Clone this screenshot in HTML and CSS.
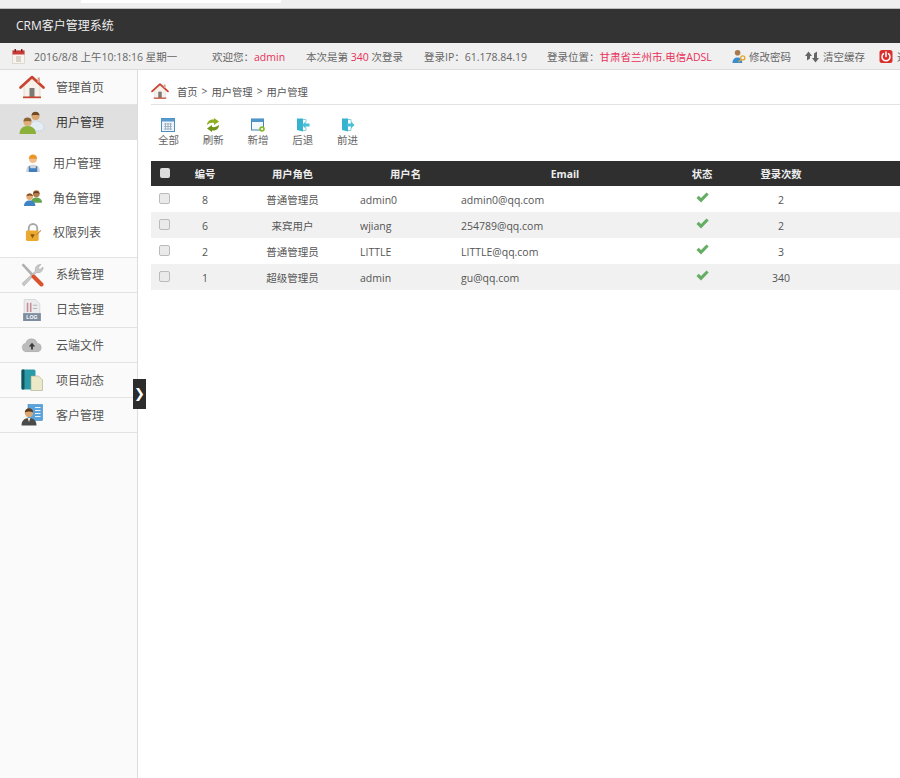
FILE: index.html
```html
<!DOCTYPE html>
<html>

<head>
	<meta name="viewport" content="width=device-width, initial-scale=1.0">
	<meta charset="UTF-8">
	<title>CRM客户管理系统</title>
	<link rel="stylesheet" href="styles.css">
</head>

<body>
	<svg class="sprite" xmlns="http://www.w3.org/2000/svg">
		<symbol id="i-home" viewBox="0 0 26 24">
			<path d="M5 11v11h16V11L13 4z" fill="#f6f1ea" stroke="#d9cfc4" stroke-width=".6" />
			<path d="M1.500 12.500 13 2l11.500 10.500" fill="none" stroke="#c9442f" stroke-width="2.600" stroke-linecap="round" stroke-linejoin="round" />
			<rect x="18.500" y="2.500" width="2.500" height="5" fill="#d8a48f" />
			<rect x="10.500" y="13" width="5" height="9" fill="#7d7a76" />
			<rect x="4" y="21.500" width="18" height="1.700" fill="#c9442f" />
		</symbol>
		<symbol id="i-users" viewBox="0 0 26 24">
			<circle cx="16.500" cy="5" r="4" fill="#d9a66f" />
			<path d="M16.500 .8a4.200 4.200 0 0 1 4 3.600c-2.500-.3-5-.5-8 0a4.200 4.200 0 0 1 4-3.600z" fill="#6f4a28" />
			<path d="M11 18c0-5 2.500-8 5.500-8s8.500 2 8.500 6-3 4-6 4h-6z" fill="#e4ecf4" stroke="#b9c7d6" stroke-width=".5" />
			<circle cx="8.500" cy="11" r="4" fill="#e0ae78" />
			<path d="M4.500 10.500a4 4 0 0 1 8 0c-2.500-.8-5-.8-8 0z" fill="#8d6434" />
			<path d="M.5 23c0-5 3-8 8-8s8.500 3 8.500 8z" fill="#8cb13a" />
		</symbol>
		<symbol id="i-worker" viewBox="0 0 18 20">
			<circle cx="9" cy="6" r="4" fill="#eebd8b" />
			<path d="M4.500 5.500a4.500 4.500 0 0 1 9 0z" fill="#ec9426" />
			<path d="M1.500 19.500c0-5 3-8 7.500-8s7.500 3 7.500 8z" fill="#d4d6d8" />
			<path d="M4.500 19.500v-6h1.500v2h6v-2h1.500v6z" fill="#3f7fbf" />
		</symbol>
		<symbol id="i-group" viewBox="0 0 20 18">
			<circle cx="13.500" cy="4.500" r="3.600" fill="#b97d4c" />
			<path d="M10 4.500a3.600 3.600 0 0 1 7 0c-2-1-5-1-7 0z" fill="#6b3f22" />
			<path d="M8 14c0-4 2.500-5.500 5.500-5.500S19.500 10 19.500 14z" fill="#63a34b" />
			<circle cx="6.500" cy="7.500" r="3.600" fill="#e5ad76" />
			<path d="M3 7a3.600 3.600 0 0 1 7 0c-2-1-5-1-7 0z" fill="#7c4a26" />
			<path d="M.5 17.500c0-4 2.500-6 6-6s6 2 6 6z" fill="#3f83c4" />
		</symbol>
		<symbol id="i-lock" viewBox="0 0 18 20">
			<path d="M4.500 9V6a4.500 4.500 0 0 1 9 0v3" fill="none" stroke="#a9a9a9" stroke-width="2" />
			<rect x="1.500" y="8.500" width="13.500" height="11" rx="1.500" fill="#eba92f" />
			<path d="M6 12.500h5l-2.500 4z" fill="#8a5a12" />
			<path d="m12 13 5-5 .7.700-5 5z" fill="#b98a4a" />
		</symbol>
		<symbol id="i-tools" viewBox="0 0 24 24">
			<path d="m1.500 2 2-1.500 10 10.500-2 2z" fill="#b0b0b0" />
			<path d="M21 1.500a5 5 0 0 0-5.500 6.500L2 20.500 4 23 16.500 9.500A5 5 0 0 0 23 4l-3 2.500-2-1.500z" fill="#c8c8c8" stroke="#a0a0a0" stroke-width=".5" />
			<path d="m13.500 13.500 8 8" stroke="#d9542e" stroke-width="4" stroke-linecap="round" />
		</symbol>
		<symbol id="i-log" viewBox="0 0 18 22">
			<path d="M1.500 1h11l4 4v16h-15z" fill="#ececef" stroke="#c9c9cf" stroke-width=".6" />
			<path d="M4 4h1.500v9H4zM7 4h1.500v9H7z" fill="#c78c96" />
			<path d="M10 6h4v1h-4zM10 9h4v1h-4z" fill="#b5b5bd" />
			<rect x=".5" y="14" width="17" height="7.500" fill="#7d8c9e" />
			<text x="9" y="20" font-size="5" font-weight="700" text-anchor="middle" fill="#fff" font-family="Liberation Sans, sans-serif">LOG</text>
		</symbol>
		<symbol id="i-cloud" viewBox="0 0 24 16">
			<path d="M6 15.500a4.800 4.800 0 0 1-.8-9.500 6.500 6.500 0 0 1 12.500 0 4.800 4.800 0 0 1 .5 9.500z" fill="#bcbcbc" stroke="#a3a3a3" stroke-width=".5" />
			<path d="M12 5.500 8.500 9.500H11v3.500h2V9.500h2.500z" fill="#3a3a3a" />
		</symbol>
		<symbol id="i-book" viewBox="0 0 22 22">
			<rect x=".5" y=".5" width="14" height="20" rx="1.500" fill="#2a9aa8" />
			<rect x=".5" y=".5" width="3" height="20" rx="1" fill="#16525c" />
			<path d="M10 7h7.500l4 4v10.500H10z" fill="#ece9c9" stroke="#a7a78c" stroke-width=".6" />
		</symbol>
		<symbol id="i-client" viewBox="0 0 22 22">
			<rect x="7" y=".5" width="14.500" height="16" fill="#5aa3dc" stroke="#2f7cb8" stroke-width=".5" />
			<path d="M14 3.500h5.500M14 6.500h5.500M14 9.500h5.500M14 12.500h5.500" stroke="#e8f3fb" stroke-width="1.200" />
			<circle cx="8" cy="9" r="4.200" fill="#d8a878" />
			<path d="M3.800 8.500a4.200 4.200 0 0 1 8.400 0c-2.500-1.300-5.500-1.300-8.400 0z" fill="#5b3a1e" />
			<path d="M.5 21.500c0-5 3-7.500 7.500-7.500s7.500 2.500 7.500 7.500z" fill="#4a4a48" />
			<path d="m6.500 14 1.500 4 1.500-4z" fill="#efe9df" />
		</symbol>
		<symbol id="i-cal" viewBox="0 0 13 15">
			<rect x=".5" y="1.500" width="12" height="13" fill="#f7f4ee" stroke="#cfc7ba" stroke-width=".6" />
			<rect x=".5" y="1.500" width="12" height="4" fill="#cc3a38" />
			<rect x="2.500" y="0" width="1.500" height="3" fill="#7a2a28" />
			<rect x="9" y="0" width="1.500" height="3" fill="#7a2a28" />
			<path d="M4 8h5M4 10h5M4 12h5" stroke="#a9a49a" stroke-width=".8" />
		</symbol>
		<symbol id="i-key" viewBox="0 0 15 15">
			<circle cx="6" cy="3.500" r="3" fill="#a9784c" />
			<path d="M.5 14.500c0-4 2.200-6 5.500-6s5 2 5 6z" fill="#3a8ed0" />
			<circle cx="11.500" cy="9" r="2.200" fill="none" stroke="#e2a62d" stroke-width="1.400" />
			<path d="m10 10.500-3 3" stroke="#e2a62d" stroke-width="1.400" />
		</symbol>
		<symbol id="i-sync" viewBox="0 0 14 14">
			<path d="M3.500 2 0 6.500h2V11l3-2V6.500h2z" fill="#666" />
			<path d="M10.500 13 7 8.500h2V4l3-2v6.500h2z" fill="#666" />
		</symbol>
		<symbol id="i-power" viewBox="0 0 14 14">
			<rect x=".5" y=".5" width="13" height="13" rx="2.500" fill="#d9302e" />
			<path d="M4.500 4.200a4 4 0 1 0 5 0" fill="none" stroke="#fff" stroke-width="1.500" stroke-linecap="round" />
			<path d="M7 2.500v4.500" stroke="#fff" stroke-width="1.500" stroke-linecap="round" />
		</symbol>
		<symbol id="i-all" viewBox="0 0 14 14">
			<rect x=".5" y=".5" width="13" height="13" fill="#eef4fa" stroke="#4f8fc0" />
			<rect x=".5" y=".5" width="13" height="3" fill="#5a9bcd" />
			<path d="M3 6h8M3 8.500h8M3 11h8M4.500 5v7M7 5v7M9.500 5v7" stroke="#8fa8bc" stroke-width=".8" />
		</symbol>
		<symbol id="i-refresh" viewBox="0 0 14 14">
			<path d="M1 7c0-4 3.500-6 7-5.500V0l5 3.500L8 7V5C5 4.500 3 5.500 1 7z" fill="#8fb021" />
			<path d="M13 7c0 4-3.500 6-7 5.500V14L1 10.500 6 7v2c3 .5 5-.5 7-2z" fill="#6f9416" />
		</symbol>
		<symbol id="i-new" viewBox="0 0 14 14">
			<rect x=".5" y="1" width="12" height="11" fill="#f3f8fc" stroke="#3f84b8" />
			<rect x=".5" y="1" width="12" height="3" fill="#4f95c8" />
			<circle cx="11" cy="11" r="2.800" fill="#8ab92e" />
			<circle cx="11" cy="11" r="1.100" fill="#fff" />
		</symbol>
		<symbol id="i-back" viewBox="0 0 14 14">
			<path d="M1 .5h6v13l-6-1.500z" fill="#35b3cf" />
			<path d="M7 1.500h3v3M7 12.500h3v-3" fill="none" stroke="#8ccfe0" />
			<path d="M6 7l3.500-3.500V5.500H13.500v3H9.500v2z" fill="#47c0d8" />
		</symbol>
		<symbol id="i-forward" viewBox="0 0 14 14">
			<path d="M1 .5h6v13l-6-1.500z" fill="#35b3cf" />
			<path d="M7 1.500h3v3M7 12.500h3v-3" fill="none" stroke="#8ccfe0" />
			<path d="M13.500 7 10 3.500V5.500H6v3h4v2z" fill="#47c0d8" />
		</symbol>
		<symbol id="i-check" viewBox="0 0 13 11">
			<path d="M.5 6 2.700 3.800 5 6 10.500.5 12.700 2.500 5 10.500z" fill="#65ad62" />
		</symbol>
	</svg>

	<div class="browser-strip">
		<div class="browser-tab"></div>
	</div>

	<div class="header">CRM客户管理系统</div>

	<div class="infobar">
		<svg class="info-cal"><use href="#i-cal" /></svg>
		<span class="info-date">2016/8/8 上午10:18:16 星期一</span>
		<span class="info-item info-welcome">欢迎您：<em>admin</em></span>
		<span class="info-item info-count">本次是第 <em>340</em> 次登录</span>
		<span class="info-item info-ip">登录IP：61.178.84.19</span>
		<span class="info-item info-place">登录位置：<em>甘肃省兰州市.电信ADSL</em></span>
		<a class="info-link link-pwd"><svg><use href="#i-key" /></svg>修改密码</a>
		<a class="info-link link-cache"><svg><use href="#i-sync" /></svg>清空缓存</a>
		<a class="info-link link-exit"><svg><use href="#i-power" /></svg>退出系统</a>
	</div>

	<div class="container">
		<div class="sidebar">
			<a class="nav-item"><svg class="nav-home"><use href="#i-home" /></svg>管理首页</a>
			<a class="nav-item active"><svg class="nav-users"><use href="#i-users" /></svg>用户管理</a>
			<div class="subnav">
				<a class="sub-item"><svg class="sub-worker"><use href="#i-worker" /></svg>用户管理</a>
				<a class="sub-item"><svg class="sub-group"><use href="#i-group" /></svg>角色管理</a>
				<a class="sub-item"><svg class="sub-lock"><use href="#i-lock" /></svg>权限列表</a>
			</div>
			<a class="nav-item raised"><svg class="nav-tools"><use href="#i-tools" /></svg>系统管理</a>
			<a class="nav-item raised"><svg class="nav-log"><use href="#i-log" /></svg>日志管理</a>
			<a class="nav-item"><svg class="nav-cloud"><use href="#i-cloud" /></svg>云端文件</a>
			<a class="nav-item"><svg class="nav-book"><use href="#i-book" /></svg>项目动态</a>
			<a class="nav-item"><svg class="nav-client"><use href="#i-client" /></svg>客户管理</a>
			<div class="sidebar-toggle">❯</div>
		</div>

		<div class="content">
			<div class="breadcrumb">
				<svg><use href="#i-home" /></svg>
				<span>首页</span><i>&gt;</i><span>用户管理</span><i>&gt;</i><span>用户管理</span>
			</div>

			<div class="toolbar">
				<a class="tool"><svg><use href="#i-all" /></svg>全部</a>
				<a class="tool"><svg><use href="#i-refresh" /></svg>刷新</a>
				<a class="tool"><svg><use href="#i-new" /></svg>新增</a>
				<a class="tool"><svg><use href="#i-back" /></svg>后退</a>
				<a class="tool"><svg><use href="#i-forward" /></svg>前进</a>
			</div>

			<table class="grid">
				<colgroup>
					<col class="col-check">
					<col class="col-id">
					<col class="col-role">
					<col class="col-name">
					<col class="col-email">
					<col class="col-state">
					<col class="col-count">
					<col>
				</colgroup>
				<thead>
					<tr>
						<th><span class="box box-head"></span></th>
						<th>编号</th>
						<th>用户角色</th>
						<th>用户名</th>
						<th>Email</th>
						<th>状态</th>
						<th>登录次数</th>
						<th></th>
					</tr>
				</thead>
				<tbody>
					<tr>
						<td><span class="box"></span></td>
						<td>8</td>
						<td>普通管理员</td>
						<td class="left">admin0</td>
						<td class="left">admin0@qq.com</td>
						<td><svg class="check"><use href="#i-check" /></svg></td>
						<td>2</td>
						<td></td>
					</tr>
					<tr>
						<td><span class="box"></span></td>
						<td>6</td>
						<td>来宾用户</td>
						<td class="left">wjiang</td>
						<td class="left">254789@qq.com</td>
						<td><svg class="check"><use href="#i-check" /></svg></td>
						<td>2</td>
						<td></td>
					</tr>
					<tr>
						<td><span class="box"></span></td>
						<td>2</td>
						<td>普通管理员</td>
						<td class="left">LITTLE</td>
						<td class="left">LITTLE@qq.com</td>
						<td><svg class="check"><use href="#i-check" /></svg></td>
						<td>3</td>
						<td></td>
					</tr>
					<tr>
						<td><span class="box"></span></td>
						<td>1</td>
						<td>超级管理员</td>
						<td class="left">admin</td>
						<td class="left">gu@qq.com</td>
						<td><svg class="check"><use href="#i-check" /></svg></td>
						<td>340</td>
						<td></td>
					</tr>
				</tbody>
			</table>
		</div>
	</div>
</body>

</html>
```

FILE: styles.css
```css
* {
	box-sizing: border-box;
}

html,
body {
	height: 100%;
}

body {
	margin: 0;
	display: flex;
	flex-direction: column;
	overflow: hidden;
	font-family: "Open Sans", "Noto Sans CJK SC", sans-serif;
	font-size: 10.5px;
	color: #555;
	background: #fff;
}

.sprite {
	display: none;
}

em {
	font-style: normal;
	color: #e8305a;
}

.browser-strip {
	height: 9px;
	flex: none;
	background: #efefef;
	border-bottom: 1px solid #bdbdbd;
}

.browser-tab {
	width: 200px;
	height: 3px;
	margin-left: 81px;
	background: #fff;
}

.header {
	height: 34px;
	flex: none;
	padding-left: 16px;
	line-height: 34px;
	font-size: 12px;
	color: #eee;
	background: #333;
}

.infobar {
	height: 27px;
	flex: none;
	display: flex;
	align-items: center;
	white-space: nowrap;
	overflow: hidden;
	color: #666;
	background: #f0f0f0;
	border-bottom: 1px solid #dcdcdc;
}

.info-cal {
	width: 13px;
	height: 15px;
	flex: none;
	margin-left: 12px;
	margin-right: 9px;
}

.info-date {
	width: 178px;
	flex: none;
}

.info-item {
	flex: none;
}

.info-welcome {
	width: 94px;
}

.info-count {
	width: 118px;
}

.info-ip {
	width: 123px;
}

.info-place {
	width: 185px;
}

.info-link {
	display: flex;
	align-items: center;
	flex: none;
}

.info-link svg {
	width: 14px;
	height: 15px;
	flex: none;
}

.link-pwd {
	width: 73px;
	gap: 3px;
}

.link-cache {
	width: 74px;
	gap: 4px;
}

.link-exit {
	gap: 4px;
}

.container {
	flex: 1;
	display: flex;
	min-height: 0;
}

.sidebar {
	position: relative;
	width: 138px;
	flex: none;
	font-size: 12px;
	background: #fafafa;
	border-right: 1px solid #ddd;
}

.nav-item {
	display: flex;
	align-items: center;
	height: 35px;
	padding-left: 56px;
	position: relative;
	color: #555;
	border-bottom: 1px solid #e3e3e3;
}

.nav-item svg {
	position: absolute;
	top: 50%;
	left: 32px;
	transform: translate(-50%, -50%);
}

.nav-item.active {
	padding-bottom: 2px;
	color: #333;
	background: #e0e0e0;
	border-bottom: 0;
}

.nav-item.raised {
	padding-bottom: 2px;
}

.nav-home {
	width: 26px;
	height: 24px;
}

.nav-users {
	width: 26px;
	height: 24px;
}

.nav-tools {
	width: 24px;
	height: 24px;
}

.nav-log {
	width: 19px;
	height: 23px;
}

.nav-cloud {
	width: 22px;
	height: 15px;
}

.nav-book {
	width: 22px;
	height: 22px;
}

.nav-client {
	width: 22px;
	height: 23px;
}

.subnav {
	height: 118px;
	padding-top: 6px;
	background: #fff;
	border-bottom: 1px solid #e3e3e3;
}

.sub-item {
	display: flex;
	align-items: center;
	height: 34.500px;
	padding-left: 53px;
	position: relative;
	color: #555;
}

.sub-item svg {
	position: absolute;
	top: 50%;
	left: 33px;
	transform: translate(-50%, -50%);
}

.sub-worker {
	width: 17px;
	height: 20px;
}

.sub-group {
	width: 19px;
	height: 18px;
}

.sub-lock {
	width: 17px;
	height: 19px;
}

.sidebar-toggle {
	position: absolute;
	top: 309px;
	left: 133px;
	width: 13px;
	height: 30px;
	line-height: 30px;
	text-align: center;
	font-size: 13px;
	font-family: "DejaVu Sans", sans-serif;
	color: #fff;
	background: #2c2c2c;
}

.content {
	flex: 1;
	min-width: 0;
	padding-left: 13px;
	overflow: hidden;
}

.breadcrumb {
	display: flex;
	align-items: center;
	height: 35px;
	padding-top: 8px;
	font-size: 10.300px;
	color: #555;
	border-bottom: 1px solid #e3e3e3;
}

.breadcrumb svg {
	width: 18px;
	height: 18px;
	margin-right: 8px;
}

.breadcrumb i {
	margin: 0 4px;
	font-style: normal;
}

.toolbar {
	display: flex;
	height: 56px;
	padding-top: 13px;
	margin-left: -5px;
}

.tool {
	width: 44.800px;
	display: flex;
	flex-direction: column;
	align-items: center;
	gap: 2px;
	line-height: 12px;
	font-size: 10.500px;
	color: #666;
}

.tool svg {
	width: 14px;
	height: 14px;
}

.grid {
	width: 760px;
	border-collapse: collapse;
	table-layout: fixed;
}

.col-check {
	width: 29px;
}

.col-id {
	width: 50px;
}

.col-role {
	width: 125px;
}

.col-name {
	width: 101px;
}

.col-email {
	width: 218px;
}

.col-state {
	width: 56px;
}

.col-count {
	width: 102px;
}

.grid th {
	height: 25px;
	padding: 0;
	font-size: 10.300px;
	font-weight: 700;
	color: #eee;
	background: #2f2f2f;
}

.grid td {
	height: 26px;
	padding: 1px 0 0;
	text-align: center;
}

.grid td.left {
	padding-left: 5px;
	text-align: left;
}

.grid tbody tr:nth-child(even) {
	background: #f1f1f1;
}

.box {
	display: block;
	width: 11px;
	height: 11px;
	margin: -2px 0 0 8px;
	background: #eaeaea;
	border: 1px solid #bbb;
	border-radius: 2px;
}

.box-head {
	width: 10px;
	height: 10px;
	margin: -1px 0 0 9px;
	background: #ddd;
	border: 0;
}

.check {
	display: block;
	width: 13px;
	height: 11px;
	margin: -4px auto 0;
}
```
